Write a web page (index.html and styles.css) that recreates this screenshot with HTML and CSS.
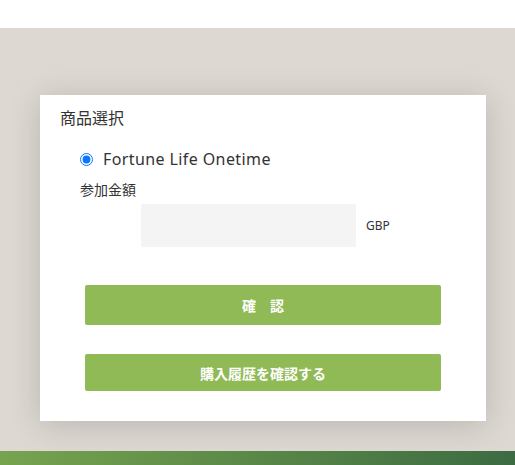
FILE: index.html
```html
<!DOCTYPE html>
<html lang="ja">
<head>
    <meta charset="UTF-8">
    <meta name="viewport" content="width=device-width, initial-scale=1.0">
    <title>商品選択</title>
    <link rel="stylesheet" href="styles.css">
</head>
<body>
    <header class="top-bar"></header>
    <main class="main">
        <div class="card">
            <h2 class="card-title">商品選択</h2>
            <label class="radio-row">
                <input type="radio" name="product" checked>
                <span>Fortune Life Onetime</span>
            </label>
            <div class="field-label">参加金額</div>
            <div class="amount-row">
                <input type="text" class="amount-input">
                <span class="currency">GBP</span>
            </div>
            <button class="btn btn-confirm">確　認</button>
            <button class="btn btn-history">購入履歴を確認する</button>
        </div>
    </main>
    <footer class="bottom-bar"></footer>
</body>
</html>
```

FILE: styles.css
```css
body {
    margin: 0;
    font-family: "Noto Sans", "Noto Sans CJK JP", sans-serif;
    color: #333;
    background: #ddd8d2;
}
.top-bar {
    height: 28px;
    background: #fff;
}
.main {
    height: 356px;
    padding-top: 67px;
    background: #ddd8d2;
}
.card {
    width: 446px;
    margin-left: 40px;
    padding: 12px 0 30px;
    box-sizing: border-box;
    background: #fff;
    box-shadow: 0 4px 30px rgba(0, 0, 0, 0.16);
}
.card-title {
    margin: 0 0 0 20px;
    font-size: 16px;
    font-weight: 400;
    line-height: 20px;
    font-family: "Noto Sans CJK JP", sans-serif;
}
.radio-row {
    display: flex;
    align-items: center;
    margin: 21px 0 0 40px;
    height: 22px;
    font-size: 16px;
    letter-spacing: 0.4px;
}
.radio-row input {
    width: 13px;
    height: 13px;
    margin: 0 10px 0 0;
    accent-color: #0a75ff;
}
.field-label {
    margin: 10px 0 0 40px;
    font-size: 14px;
    line-height: 18px;
    font-family: "Noto Sans CJK JP", sans-serif;
}
.amount-row {
    display: flex;
    align-items: center;
    gap: 10px;
    margin: 6px 0 0 101px;
}
.amount-input {
    width: 215px;
    height: 43px;
    border: none;
    border-radius: 2px;
    background: #f4f4f4;
    box-sizing: border-box;
}
.currency {
    font-size: 12px;
}
.btn {
    display: block;
    width: 356px;
    margin-left: 45px;
    border: none;
    border-radius: 2px;
    background: #8fba55;
    color: #fff;
    font-family: "Noto Sans CJK JP", sans-serif;
    font-size: 14px;
    font-weight: 700;
    cursor: pointer;
}
.btn-confirm {
    height: 40px;
    margin-top: 38px;
}
.btn-history {
    height: 37px;
    margin-top: 29px;
}
.bottom-bar {
    height: 14px;
    background: linear-gradient(90deg, #77a44e 0%, #3c6b42 100%);
}
```
